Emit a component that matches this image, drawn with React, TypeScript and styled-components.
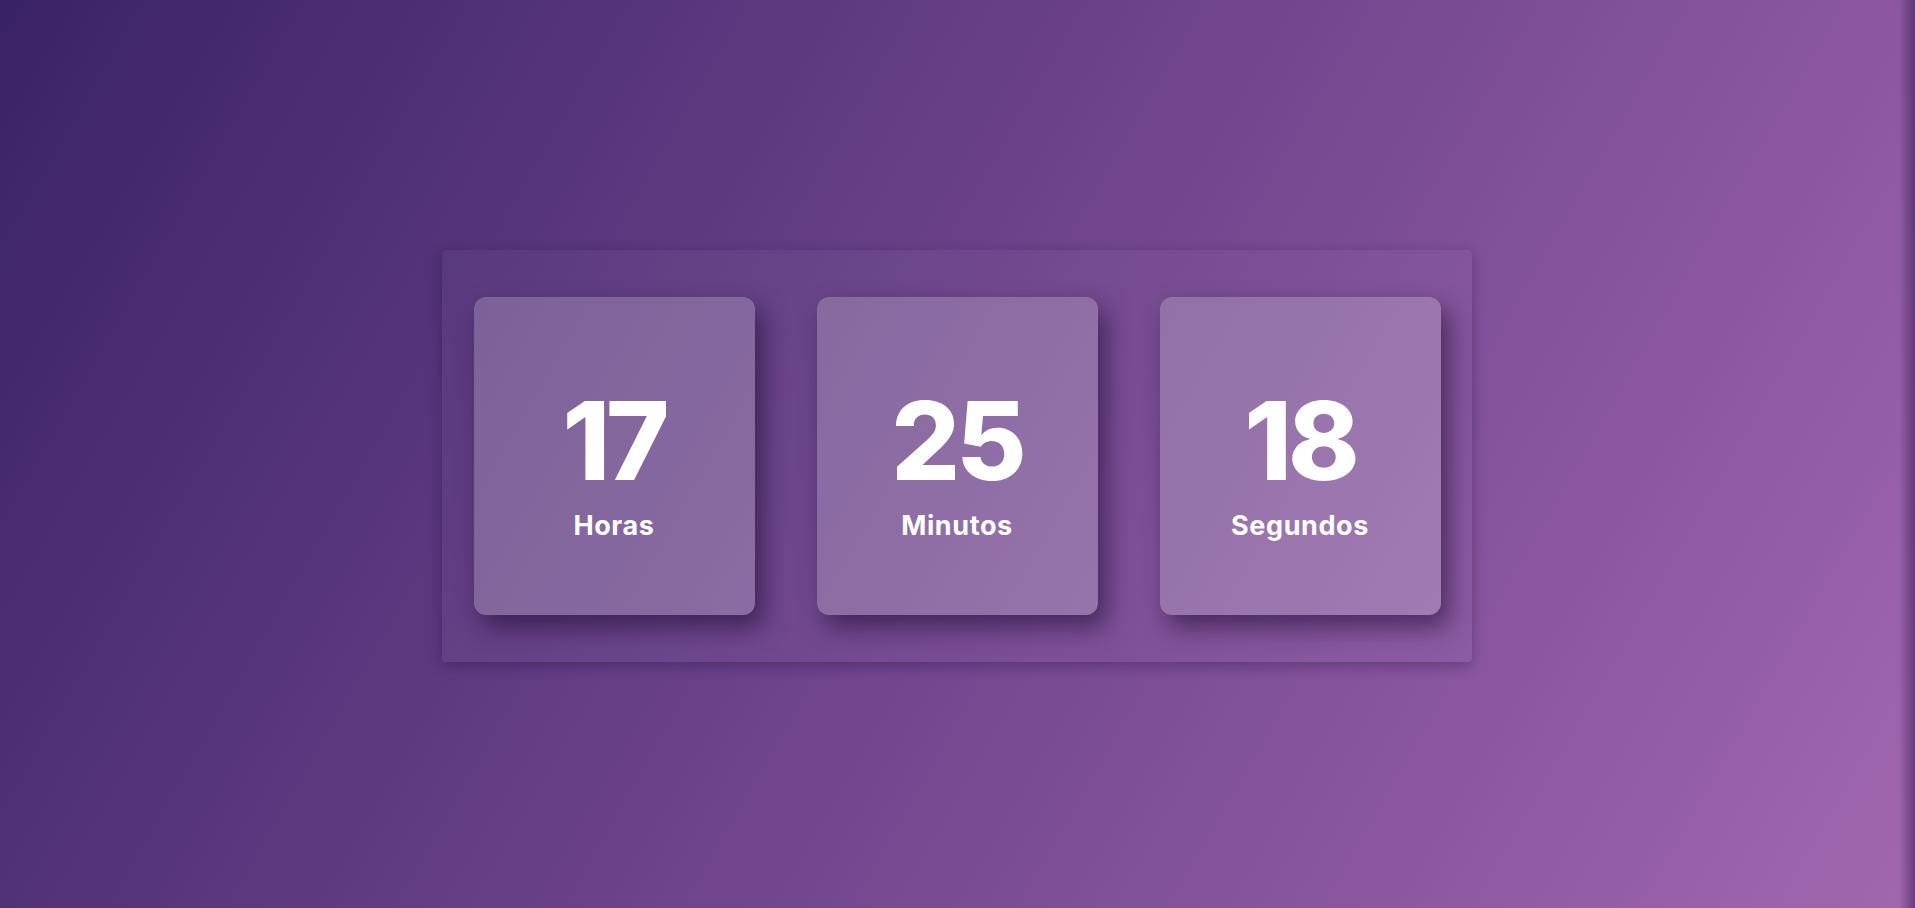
import React from 'react';
import styled, {createGlobalStyle} from "styled-components";

type UnitType = {
    value: string
    label: string
}

const units: UnitType[] = [
    {value: '17', label: 'Horas'},
    {value: '25', label: 'Minutos'},
    {value: '18', label: 'Segundos'},
]

const GlobalStyle = createGlobalStyle`
    html, body {
        margin: 0;
        padding: 0;
    }
    body {
        font-family: Inter, "Noto Sans", sans-serif;
        background:
            linear-gradient(to left, rgba(40, 10, 60, 0.45), rgba(40, 10, 60, 0) 16px) right top / 16px 100% no-repeat,
            linear-gradient(120deg, #3a2267 0%, #6a4189 45%, #a167af 100%);
        min-height: 100vh;
    }
`

export default function App() {
    return (
        <>
            <GlobalStyle/>
            <Page>
                <Clock>
                    {units.map(u => (
                        <Card key={u.label}>
                            <Value>{u.value}</Value>
                            <Label>{u.label}</Label>
                        </Card>
                    ))}
                </Clock>
            </Page>
        </>
    );
}

const Page = styled.div`
    min-height: 100vh;
    display: flex;
    align-items: center;
    justify-content: center;
`

const Clock = styled.div`
    display: flex;
    gap: 62px;
    padding: 47px 31px 47px 32px;
    background-color: rgba(255, 255, 255, 0.03);
    border-radius: 4px;
    box-shadow: 0 4px 14px rgba(20, 5, 40, 0.3);
    margin: 4px 2px 0 0;
`

const Card = styled.div`
    width: 281px;
    height: 318px;
    border-radius: 12px;
    background-color: rgba(255, 255, 255, 0.2);
    box-shadow: 8px 12px 24px rgba(25, 8, 45, 0.55);
    display: flex;
    flex-direction: column;
    align-items: center;
    justify-content: center;
    color: #ffffff;
`

const Value = styled.div`
    font-size: 108px;
    font-weight: 800;
    line-height: 1;
    letter-spacing: -4px;
    margin-top: 17px;
`

const Label = styled.div`
    font-size: 27px;
    font-weight: 700;
    letter-spacing: 0.6px;
    margin-top: 14px;
`
